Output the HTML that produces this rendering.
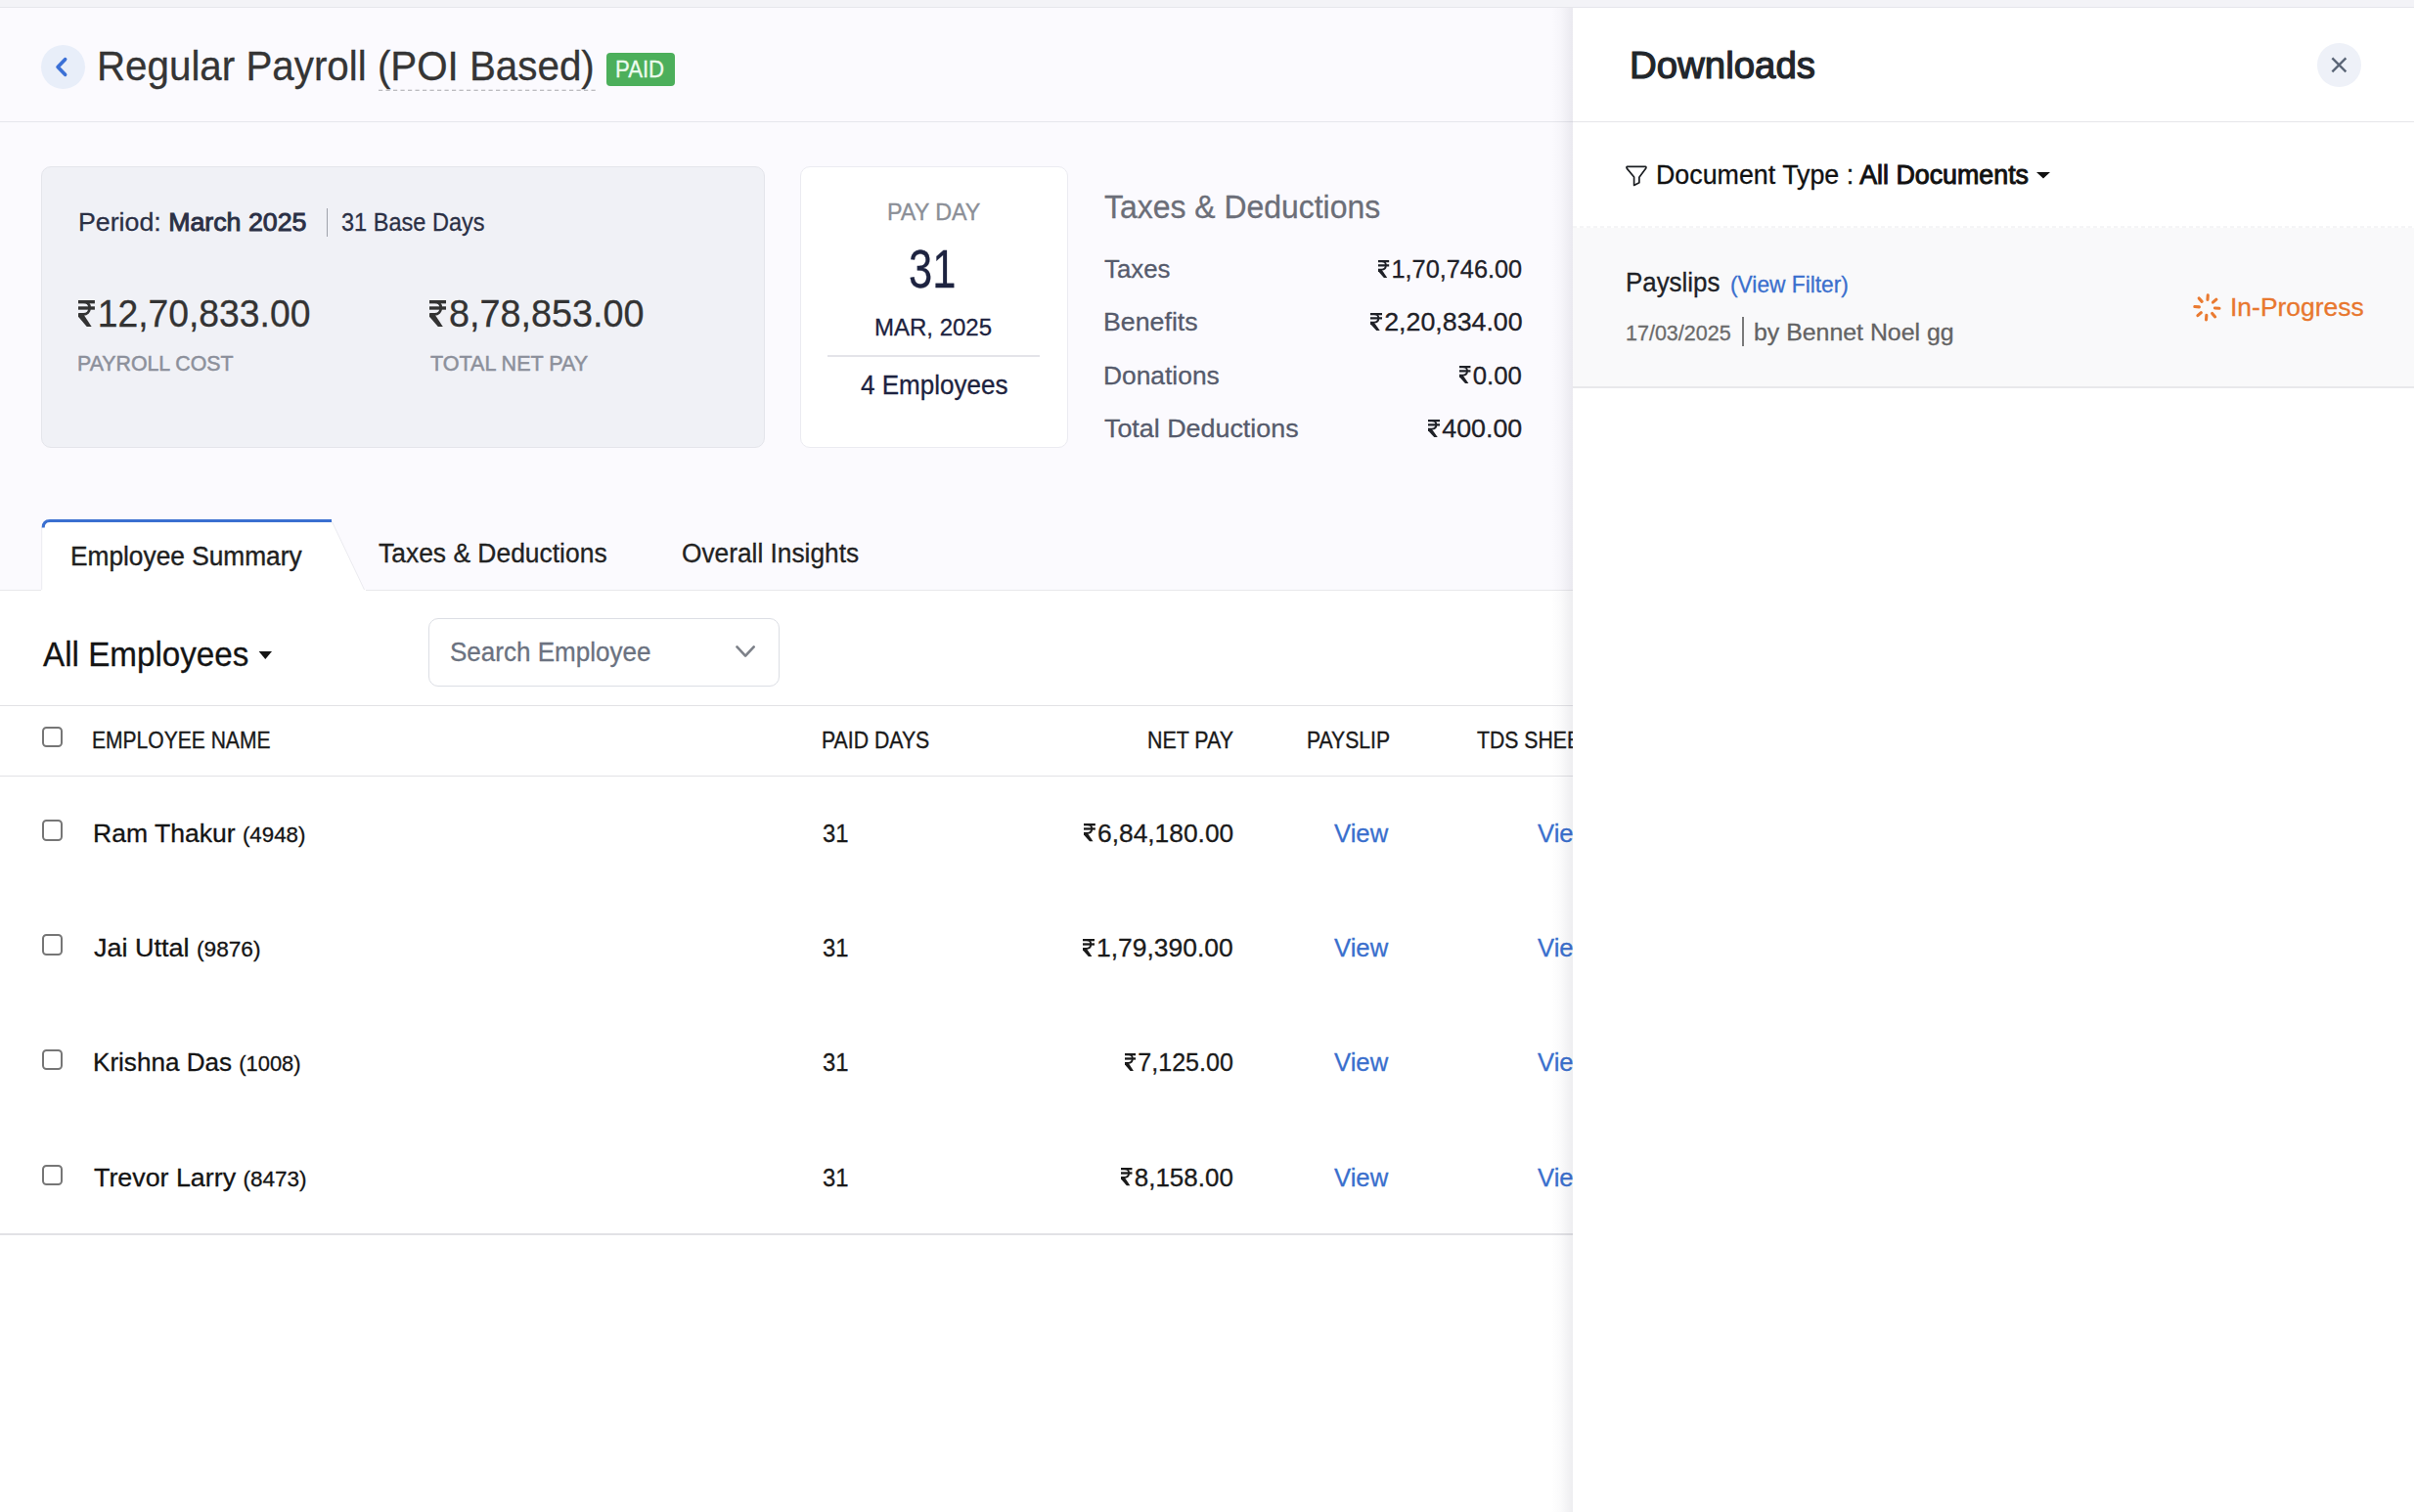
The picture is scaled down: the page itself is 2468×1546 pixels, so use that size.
<!DOCTYPE html>
<html><head><meta charset="utf-8"><title>Regular Payroll</title>
<style>

html,body{margin:0;padding:0}
body{font-family:"Liberation Sans", sans-serif;}
.t{position:absolute;white-space:nowrap;line-height:1;transform-origin:0 0;-webkit-text-stroke:0.3px currentColor}
.t b{font-weight:700}
.t b.sb{font-weight:400;-webkit-text-stroke:0.95px currentColor}
.rs{display:inline-block;height:0.69em;width:0.4554em;vertical-align:baseline;margin-right:0.075em;fill:currentColor;color:inherit}

body{width:2468px;height:1546px;overflow:hidden;position:relative;background:#ffffff}
.a{position:absolute}
.cb{position:absolute;left:42.5px;width:17.5px;height:17.5px;border:2px solid #767676;border-radius:4.5px;background:#fff}
</style></head><body>
<svg width="0" height="0" style="position:absolute"><defs>
<symbol id="rs" viewBox="0 0 66 100">
<rect x="0" y="0" width="66" height="12.5"/><rect x="0" y="23.5" width="66" height="12.5"/>
<path d="M0,6.25 H20 C37,6.25 45,16 45,29.5 C45,43 36,53.5 20,53.5 H2" fill="none" stroke="currentColor" stroke-width="10.5"/>
<polygon points="0,49 20,52 53,100 34,100 0,62"/>
</symbol></defs></svg>
<!-- main backgrounds -->
<div class="a" style="left:0;top:0;width:2468px;height:603px;background:#fbfafe"></div>
<div class="a" style="left:0;top:0;width:2468px;height:7px;background:#f3f3f7"></div>
<div class="a" style="left:0;top:7px;width:2468px;height:1px;background:#e6e6eb"></div>
<div class="a" style="left:0;top:124px;width:1608px;height:1px;background:#e6e6ec"></div>
<!-- back button -->
<div class="a" style="left:42px;top:46px;width:45px;height:45px;border-radius:50%;background:#e8eef9"></div>
<svg class="a" style="left:0;top:0" width="120" height="120"><polyline points="66.6,60.7 59.1,68.5 66.6,76.3" fill="none" stroke="#3b70d6" stroke-width="3.7" stroke-linecap="round" stroke-linejoin="round"/></svg>
<!-- dashed underline -->
<svg class="a" style="left:387px;top:91px" width="224" height="3"><line x1="0" y1="1.25" x2="222" y2="1.25" stroke="#a6a6ab" stroke-width="1.2" stroke-dasharray="4.2 3.3"/></svg>
<!-- paid badge -->
<div class="a" style="left:620px;top:54px;width:70px;height:34px;border-radius:4px;background:#4caf5b"></div>
<!-- summary card -->
<div class="a" style="left:42px;top:170px;width:738px;height:286px;border:1px solid #e4e5eb;border-radius:10px;background:#f0f1f6"></div>
<div class="a" style="left:333.5px;top:213px;width:1px;height:29px;background:#9fa2ab"></div>
<!-- pay day card -->
<div class="a" style="left:818px;top:170px;width:272px;height:286px;border:1px solid #ebebf1;border-radius:10px;background:#ffffff"></div>
<div class="a" style="left:846px;top:363px;width:217px;height:2px;background:#e4e4e9"></div>
<!-- tabs -->
<div class="a" style="left:0;top:603px;width:1608px;height:1px;background:#e8e8eb"></div>
<svg class="a" style="left:0;top:520px" width="400" height="90">
 <path d="M42.7,84 L42.7,20 Q42.7,12.5 50,12.5 L339,12.5 L373,84" fill="#ffffff" stroke="#ebebf0" stroke-width="1"/>
 <path d="M44.2,19.5 Q44.2,12.5 51,12.5 L339,12.5" fill="none" stroke="#3a6fd0" stroke-width="3"/>
 <rect x="42" y="83" width="332" height="3" fill="#ffffff"/>
</svg>
<!-- toolbar -->
<svg class="a" style="left:260px;top:660px" width="24" height="20"><polygon points="4.6,6 18,6 11.3,14" fill="#141414"/></svg>
<div class="a" style="left:438px;top:631.5px;width:357px;height:68px;border:1.5px solid #dcdee4;border-radius:10px;background:#fff"></div>
<svg class="a" style="left:740px;top:650px" width="40" height="30"><polyline points="13.5,11.4 22.1,20.6 30.7,11.4" fill="none" stroke="#7d8189" stroke-width="2.6" stroke-linecap="round" stroke-linejoin="round"/></svg>
<!-- table lines -->
<div class="a" style="left:0;top:720.5px;width:1608px;height:1.5px;background:#e2e2e5"></div>
<div class="a" style="left:0;top:792.5px;width:1608px;height:1.5px;background:#e2e2e5"></div>
<div class="a" style="left:0;top:1261px;width:1608px;height:1.5px;background:#e2e2e5"></div>
<div class="cb" style="top:742.5px"></div>
<div class="cb" style="top:838.2px"></div>
<div class="cb" style="top:955.4px"></div>
<div class="cb" style="top:1072.5px"></div>
<div class="cb" style="top:1190.6px"></div>
<div class="t" id="title" style="left:99.08px;top:47.00px;font-size:42px;font-weight:400;color:#353535;transform:scaleX(0.9601);">Regular Payroll (POI Based)</div>
<div class="t" id="paid" style="left:629.44px;top:60.00px;font-size:23px;font-weight:400;color:#ecfbee;transform:scaleX(0.9647);">PAID</div>
<div class="t" id="period" style="left:79.50px;top:214.00px;font-size:26.7px;font-weight:400;color:#2b3045;transform:scaleX(1.0022);">Period: <b class="sb">March 2025</b></div>
<div class="t" id="basedays" style="left:349.00px;top:214.00px;font-size:26.7px;font-weight:400;color:#2b3045;transform:scaleX(0.8819);">31 Base Days</div>
<div class="t" id="amt1" style="left:79.50px;top:301.00px;font-size:39px;font-weight:400;color:#333333;transform:scaleX(0.9556);"><svg class="rs" viewBox="0 0 66 100"><use href="#rs"/></svg>12,70,833.00</div>
<div class="t" id="amt2" style="left:439.00px;top:301.00px;font-size:39px;font-weight:400;color:#333333;transform:scaleX(0.9681);"><svg class="rs" viewBox="0 0 66 100"><use href="#rs"/></svg>8,78,853.00</div>
<div class="t" id="lbl1" style="left:79.03px;top:360.70px;font-size:22px;font-weight:400;color:#8c909b;transform:scaleX(0.9695);-webkit-text-stroke:0.5px #8c909b;">PAYROLL COST</div>
<div class="t" id="lbl2" style="left:440.00px;top:360.70px;font-size:22px;font-weight:400;color:#8c909b;transform:scaleX(0.9788);-webkit-text-stroke:0.5px #8c909b;">TOTAL NET PAY</div>
<div class="t" id="payday" style="left:906.66px;top:205.00px;font-size:24.7px;font-weight:400;color:#8b8f97;transform:scaleX(0.9440);-webkit-text-stroke:0.35px #8b8f97;">PAY DAY</div>
<div class="t" id="d31" style="left:929.42px;top:248.30px;font-size:55px;font-weight:400;color:#1d2340;transform:scaleX(0.7895);">31</div>
<div class="t" id="mar" style="left:894.00px;top:322.50px;font-size:24px;font-weight:400;color:#1d2340;">MAR, 2025</div>
<div class="t" id="emps" style="left:880.00px;top:380.40px;font-size:27.6px;font-weight:400;color:#1d2340;transform:scaleX(0.9434);">4 Employees</div>
<div class="t" id="tdh" style="left:1129.00px;top:195.00px;font-size:33.4px;font-weight:400;color:#6b6e78;transform:scaleX(0.9559);">Taxes &amp; Deductions</div>
<div class="t" id="tl1" style="left:1129.00px;top:261.90px;font-size:26.2px;font-weight:400;color:#565b6c;transform:scaleX(0.9853);">Taxes</div>
<div class="t" id="tl2" style="left:1127.98px;top:316.20px;font-size:26.2px;font-weight:400;color:#565b6c;transform:scaleX(1.0215);">Benefits</div>
<div class="t" id="tl3" style="left:1127.99px;top:370.50px;font-size:26.2px;font-weight:400;color:#565b6c;transform:scaleX(1.0068);">Donations</div>
<div class="t" id="tl4" style="left:1129.00px;top:425.20px;font-size:26.2px;font-weight:400;color:#565b6c;transform:scaleX(1.0259);">Total Deductions</div>
<div class="t" id="tv1" style="left:1409.00px;top:261.90px;font-size:26.2px;font-weight:400;color:#1f2128;transform:scaleX(0.9671);"><svg class="rs" viewBox="0 0 66 100"><use href="#rs"/></svg>1,70,746.00</div>
<div class="t" id="tv2" style="left:1400.60px;top:316.20px;font-size:26.2px;font-weight:400;color:#1f2128;transform:scaleX(1.0224);"><svg class="rs" viewBox="0 0 66 100"><use href="#rs"/></svg>2,20,834.00</div>
<div class="t" id="tv3" style="left:1492.00px;top:370.50px;font-size:26.2px;font-weight:400;color:#1f2128;transform:scaleX(0.9846);"><svg class="rs" viewBox="0 0 66 100"><use href="#rs"/></svg>0.00</div>
<div class="t" id="tv4" style="left:1459.70px;top:425.20px;font-size:26.2px;font-weight:400;color:#1f2128;transform:scaleX(1.0245);"><svg class="rs" viewBox="0 0 66 100"><use href="#rs"/></svg>400.00</div>
<div class="t" id="tab1" style="left:72.23px;top:556.00px;font-size:27px;font-weight:400;color:#1f1f1f;transform:scaleX(0.9733);-webkit-text-stroke:0.4px #1f1f1f;">Employee Summary</div>
<div class="t" id="tab2" style="left:387.00px;top:553.00px;font-size:27px;font-weight:400;color:#222222;transform:scaleX(0.9790);">Taxes &amp; Deductions</div>
<div class="t" id="tab3" style="left:697.00px;top:553.00px;font-size:27px;font-weight:400;color:#222222;transform:scaleX(0.9731);">Overall Insights</div>
<div class="t" id="allemp" style="left:43.90px;top:651.30px;font-size:35.3px;font-weight:400;color:#141414;transform:scaleX(0.9408);">All Employees</div>
<div class="t" id="search" style="left:459.86px;top:652.70px;font-size:27.6px;font-weight:400;color:#6b7280;transform:scaleX(0.9438);">Search Employee</div>
<div class="t" id="h1" style="left:94.40px;top:746.00px;font-size:23.3px;font-weight:400;color:#1a1a1a;transform:scaleX(0.9035);-webkit-text-stroke:0.35px #1a1a1a;">EMPLOYEE NAME</div>
<div class="t" id="h2" style="left:839.59px;top:746.00px;font-size:23.3px;font-weight:400;color:#1a1a1a;transform:scaleX(0.9125);-webkit-text-stroke:0.35px #1a1a1a;">PAID DAYS</div>
<div class="t" id="h3" style="left:1172.68px;top:746.00px;font-size:23.3px;font-weight:400;color:#1a1a1a;transform:scaleX(0.9179);-webkit-text-stroke:0.35px #1a1a1a;">NET PAY</div>
<div class="t" id="h4" style="left:1336.09px;top:746.00px;font-size:23.3px;font-weight:400;color:#1a1a1a;transform:scaleX(0.9076);-webkit-text-stroke:0.35px #1a1a1a;">PAYSLIP</div>
<div class="t" id="h5" style="left:1510.00px;top:746.00px;font-size:23.3px;font-weight:400;color:#1a1a1a;transform:scaleX(0.9100);-webkit-text-stroke:0.35px #1a1a1a;">TDS SHEET</div>
<div class="t" id="n0" style="left:94.91px;top:838.80px;font-size:26.7px;font-weight:400;color:#141414;transform:scaleX(0.9945);">Ram Thakur <span style="font-size:0.84em">(4948)</span></div>
<div class="t" id="pd0" style="left:840.50px;top:838.80px;font-size:26.7px;font-weight:400;color:#1a1a1a;transform:scaleX(0.8931);">31</div>
<div class="t" id="np0" style="left:1107.70px;top:838.80px;font-size:26.7px;font-weight:400;color:#1a1a1a;transform:scaleX(0.9877);"><svg class="rs" viewBox="0 0 66 100"><use href="#rs"/></svg>6,84,180.00</div>
<div class="t" id="v0" style="left:1364.00px;top:838.80px;font-size:26.7px;font-weight:400;color:#3a6fcd;transform:scaleX(0.9621);">View</div>
<div class="t" id="vt0" style="left:1571.60px;top:838.80px;font-size:26.7px;font-weight:400;color:#3a6fcd;transform:scaleX(0.9620);">View</div>
<div class="t" id="n1" style="left:95.90px;top:956.20px;font-size:26.7px;font-weight:400;color:#141414;transform:scaleX(1.0113);">Jai Uttal <span style="font-size:0.84em">(9876)</span></div>
<div class="t" id="pd1" style="left:840.50px;top:956.20px;font-size:26.7px;font-weight:400;color:#1a1a1a;transform:scaleX(0.8931);">31</div>
<div class="t" id="np1" style="left:1107.30px;top:956.20px;font-size:26.7px;font-weight:400;color:#1a1a1a;transform:scaleX(0.9903);"><svg class="rs" viewBox="0 0 66 100"><use href="#rs"/></svg>1,79,390.00</div>
<div class="t" id="v1" style="left:1364.00px;top:956.20px;font-size:26.7px;font-weight:400;color:#3a6fcd;transform:scaleX(0.9621);">View</div>
<div class="t" id="vt1" style="left:1571.60px;top:956.20px;font-size:26.7px;font-weight:400;color:#3a6fcd;transform:scaleX(0.9620);">View</div>
<div class="t" id="n2" style="left:94.92px;top:1073.40px;font-size:26.7px;font-weight:400;color:#141414;transform:scaleX(0.9769);">Krishna Das <span style="font-size:0.84em">(1008)</span></div>
<div class="t" id="pd2" style="left:840.50px;top:1073.40px;font-size:26.7px;font-weight:400;color:#1a1a1a;transform:scaleX(0.8931);">31</div>
<div class="t" id="np2" style="left:1150.00px;top:1073.40px;font-size:26.7px;font-weight:400;color:#1a1a1a;transform:scaleX(0.9390);"><svg class="rs" viewBox="0 0 66 100"><use href="#rs"/></svg>7,125.00</div>
<div class="t" id="v2" style="left:1364.00px;top:1073.40px;font-size:26.7px;font-weight:400;color:#3a6fcd;transform:scaleX(0.9621);">View</div>
<div class="t" id="vt2" style="left:1571.60px;top:1073.40px;font-size:26.7px;font-weight:400;color:#3a6fcd;transform:scaleX(0.9620);">View</div>
<div class="t" id="n3" style="left:95.90px;top:1190.50px;font-size:26.7px;font-weight:400;color:#141414;transform:scaleX(1.0051);">Trevor Larry <span style="font-size:0.84em">(8473)</span></div>
<div class="t" id="pd3" style="left:840.50px;top:1190.50px;font-size:26.7px;font-weight:400;color:#1a1a1a;transform:scaleX(0.8931);">31</div>
<div class="t" id="np3" style="left:1146.00px;top:1190.50px;font-size:26.7px;font-weight:400;color:#1a1a1a;transform:scaleX(0.9729);"><svg class="rs" viewBox="0 0 66 100"><use href="#rs"/></svg>8,158.00</div>
<div class="t" id="v3" style="left:1364.00px;top:1190.50px;font-size:26.7px;font-weight:400;color:#3a6fcd;transform:scaleX(0.9621);">View</div>
<div class="t" id="vt3" style="left:1571.60px;top:1190.50px;font-size:26.7px;font-weight:400;color:#3a6fcd;transform:scaleX(0.9620);">View</div>
<!-- downloads panel -->
<div class="a" style="left:1586px;top:8px;width:22px;height:1538px;background:linear-gradient(to right, rgba(50,50,80,0) 0%, rgba(50,50,80,0.025) 45%, rgba(50,50,80,0.085) 100%)"></div>
<div class="a" id="panel" style="left:1608px;top:8px;width:860px;height:1538px;background:#ffffff"></div>
<div class="a" style="left:1608px;top:124px;width:860px;height:1px;background:#e6e6ea"></div>
<div class="a" style="left:2369px;top:44px;width:44.5px;height:44.5px;border-radius:50%;background:#eef1f8"></div>
<svg class="a" style="left:2370px;top:45px" width="44" height="44"><path d="M14.4,14.4 L28.4,28.4 M28.4,14.4 L14.4,28.4" stroke="#5b6677" stroke-width="2.4" stroke-linecap="butt"/></svg>
<svg class="a" style="left:1655px;top:160px" width="40" height="40"><path d="M8.6,10.4 L27,10.4 Q28.6,10.6 27.6,12.2 L20.9,21.2 L20.9,26.7 L15.6,29.4 L15.6,21 L8.4,12.4 Q7.4,10.6 8.6,10.4 Z" fill="none" stroke="#1b1e22" stroke-width="1.7" stroke-linejoin="round"/></svg>
<svg class="a" style="left:2075px;top:170px" width="30" height="20"><polygon points="7,6 21,6 14,12.6" fill="#111"/></svg>
<svg class="a" style="left:1608px;top:231px" width="860" height="3"><line x1="0" y1="1" x2="860" y2="1" stroke="#ebebee" stroke-width="1" stroke-dasharray="4 3"/></svg>
<div class="a" style="left:1608px;top:233px;width:860px;height:162px;background:#f9f9fa"></div>
<div class="a" style="left:1608px;top:395px;width:860px;height:1.5px;background:#e8e8eb"></div>
<div class="a" style="left:1780.5px;top:323.5px;width:2px;height:30px;background:#7a7a7a"></div>
<svg class="a" style="left:2236px;top:294px" width="40" height="40">
 <g stroke="#ea7a30" stroke-width="3.1" stroke-linecap="round" transform="translate(20.4,20.4) rotate(4)">
  <line x1="0" y1="-8" x2="0" y2="-12.6"/><line x1="0" y1="8" x2="0" y2="12.6"/>
  <line x1="-8" y1="0" x2="-12.6" y2="0"/><line x1="8" y1="0" x2="12.6" y2="0"/>
  <line x1="5.66" y1="-5.66" x2="8.9" y2="-8.9"/><line x1="-5.66" y1="5.66" x2="-8.9" y2="8.9"/>
  <line x1="-5.66" y1="-5.66" x2="-8.9" y2="-8.9"/><line x1="5.66" y1="5.66" x2="8.9" y2="8.9"/>
 </g></svg>
<div class="t" id="dl" style="left:1665.52px;top:48.30px;font-size:38.8px;font-weight:400;color:#22262b;transform:scaleX(0.9900);-webkit-text-stroke:1.2px #22262b;">Downloads</div>
<div class="t" id="doctype" style="left:1692.61px;top:166.00px;font-size:27px;font-weight:400;color:#111111;transform:scaleX(0.9930);">Document Type : <b class="sb">All Documents</b></div>
<div class="t" id="payslips" style="left:1661.96px;top:275.40px;font-size:27.6px;font-weight:400;color:#1e2227;transform:scaleX(0.9382);">Payslips</div>
<div class="t" id="viewf" style="left:1768.54px;top:279.30px;font-size:23.8px;font-weight:400;color:#3a6fcd;transform:scaleX(0.9560);">(View Filter)</div>
<div class="t" id="date" style="left:1661.91px;top:329.60px;font-size:21.8px;font-weight:400;color:#6b6b6b;transform:scaleX(0.9870);">17/03/2025</div>
<div class="t" id="by" style="left:1792.58px;top:327.60px;font-size:24.4px;font-weight:400;color:#636363;transform:scaleX(1.0196);">by Bennet Noel gg</div>
<div class="t" id="inprog" style="left:2280.39px;top:300.50px;font-size:26.2px;font-weight:400;color:#e8772e;transform:scaleX(1.0104);">In-Progress</div>
</body></html>
